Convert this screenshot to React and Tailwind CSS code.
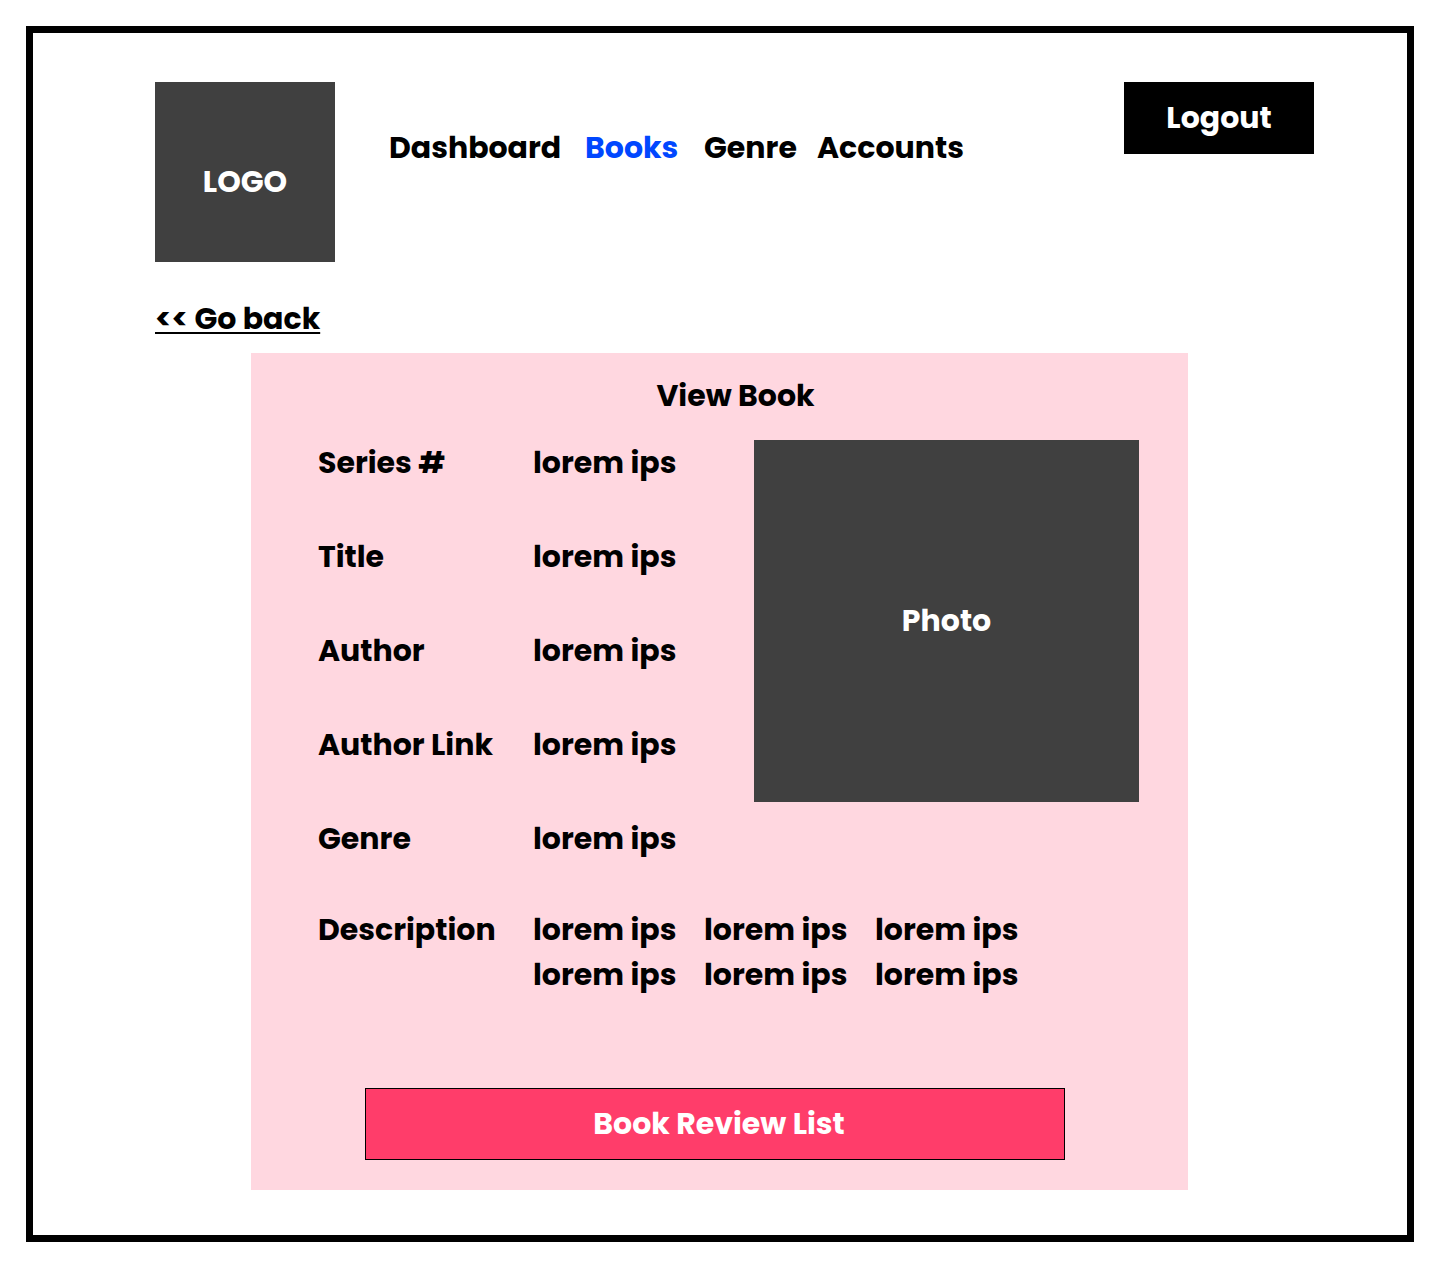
const navItems = [
  { label: "Dashboard" },
  { label: "Books", active: true },
  { label: "Genre" },
  { label: "Accounts" },
];

const details = [
  { label: "Series #", value: "lorem ips" },
  { label: "Title", value: "lorem ips" },
  { label: "Author", value: "lorem ips" },
  { label: "Author Link", value: "lorem ips" },
  { label: "Genre", value: "lorem ips" },
];

const description = Array(6).fill("lorem ips");

function Header() {
  return (
    <header className="flex items-start pl-[122px] pr-[93px]">
      <div className="flex size-[180px] shrink-0 justify-center bg-[#404040] pt-[77px] text-white">
        LOGO
      </div>
      <nav className="mt-[43px] ml-[54px] grid grid-cols-[196px_119px_113px_auto]">
        {navItems.map(({ label, active }) => (
          <a
            key={label}
            href="#"
            aria-current={active ? "page" : undefined}
            className={active ? "text-[#0047ff]" : "text-black"}
          >
            {label}
          </a>
        ))}
      </nav>
      <button
        type="button"
        className="ml-auto w-[190px] shrink-0 bg-black pt-[13px] pb-[14px] text-white"
      >
        Logout
      </button>
    </header>
  );
}

function BookCard() {
  return (
    <main className="mx-auto w-full max-w-[937px] bg-[#ffd7e0] pt-5 pb-[30px]">
      <h1 className="pl-8 text-center">View Book</h1>
      <div className="mt-[22px] flex items-start justify-between pr-[49px] pl-[67px]">
        <dl className="flex flex-col gap-[49px]">
          {details.map(({ label, value }) => (
            <div key={label} className="grid grid-cols-[215px_auto]">
              <dt>{label}</dt>
              <dd>{value}</dd>
            </div>
          ))}
        </dl>
        <div className="flex h-[362px] w-[385px] justify-center bg-[#404040] pt-[158px] text-white">
          Photo
        </div>
      </div>
      <dl className="mt-[46px] grid grid-cols-[215px_auto] pr-[49px] pl-[67px]">
        <dt>Description</dt>
        <dd className="grid grid-cols-[171px_171px_auto]">
          {description.map((text, index) => (
            <span key={index}>{text}</span>
          ))}
        </dd>
      </dl>
      <div className="mt-[91px] pr-[123px] pl-[114px]">
        <button
          type="button"
          className="w-full border border-black bg-[#ff3d6a] pt-3 pb-[13px] pl-2 text-white"
        >
          Book Review List
        </button>
      </div>
    </main>
  );
}

export default function App() {
  return (
    <div className="flex min-h-screen flex-col bg-white p-[26px] font-['Poppins','Inter',sans-serif] text-[30px] leading-[45px] font-bold text-black">
      <div className="grow border-[7px] border-black pt-[49px] pb-[45px]">
        <Header />
        <div className="mt-[34px] flex pl-[122px]">
          <a href="#" className="underline decoration-2 underline-offset-3">
            &lt;&lt; Go back
          </a>
        </div>
        <div className="mt-3 pr-px">
          <BookCard />
        </div>
      </div>
    </div>
  );
}
